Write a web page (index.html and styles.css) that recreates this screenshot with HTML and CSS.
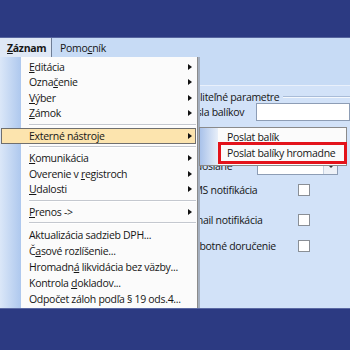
FILE: index.html
```html
<!DOCTYPE html>
<html lang="sk">
	<head>
		<meta charset="UTF-8">
		<meta name="viewport" content="width=device-width, initial-scale=1.0">
		<title>Záznam</title>
		<link rel="stylesheet" href="styles.css">
	</head>
	<body>
		<div id="screen">
			<div class="topband"></div>
			<div class="menubar">
				<div class="bar-item active"><u>Z</u>áznam</div>
				<div class="bar-item">Pomo<u>c</u>ník</div>
			</div>
			<div class="client">
				<div class="toolstrip"></div>
				<div class="form">
					<div class="group-title"><span>Voliteľné parametre</span><div class="group-line"></div></div>
					<div class="row row-text"><span class="label">Čísla balíkov</span><div class="textbox"></div></div>
					<div class="row row-gap"></div>
					<div class="row row-combo"><span class="label">Odoslané</span><div class="combo"><span class="combo-btn"></span></div></div>
					<div class="row row-check"><span class="label">SMS notifikácia</span><span class="check"></span></div>
					<div class="row row-check"><span class="label">Email notifikácia</span><span class="check"></span></div>
					<div class="row row-last"><span class="label">Sobotné doručenie</span><span class="check"></span></div>
				</div>

				<!-- rozbalené menu Záznam -->
				<div class="menu">
					<div class="mi sub"><span><u>E</u>ditácia</span></div>
					<div class="mi sub"><span>Ozna<u>č</u>enie</span></div>
					<div class="mi sub"><span><u>V</u>ýber</span></div>
					<div class="mi sub"><span><u>Z</u>ámok</span></div>
					<div class="sep"></div>
					<div class="mi sub hot"><span>Externé nástroje</span></div>
					<div class="sep"></div>
					<div class="mi sub"><span><u>K</u>omunikácia</span></div>
					<div class="mi sub"><span>Overenie v <u>r</u>egistroch</span></div>
					<div class="mi sub"><span><u>U</u>dalosti</span></div>
					<div class="sep"></div>
					<div class="mi sub"><span><u>P</u>renos -&gt;</span></div>
					<div class="sep"></div>
					<div class="mi tall"><span>Aktualizácia sadzieb DPH...</span></div>
					<div class="mi tall"><span>Č<u>a</u>sové rozlíšenie...</span></div>
					<div class="mi tall"><span>Hromadn<u>á</u> likvidácia bez väzby...</span></div>
					<div class="mi tall"><span>Kontrola <u>d</u>okladov...</span></div>
					<div class="mi tall"><span>Odpočet záloh podľa § 19 ods.4...</span></div>
				</div>

				<div class="submenu">
					<div class="si">Poslat balík</div>
					<div class="si">Poslat balíky hromadne</div>
				</div>
				<div class="mark"></div>
			</div>
			<div class="bottomband"></div>
		</div>
	</body>
</html>
```

FILE: styles.css
```css
* {
	margin: 0;
	padding: 0;
	box-sizing: border-box;
}

body {
	font-family: "Open Sans", "Noto Sans", sans-serif;
	font-size: 10.5px;
	letter-spacing: -0.3px;
	color: #161616;
	background-color: #2c3a82;
}

u {
	text-decoration-thickness: 1px;
	text-underline-offset: 1px;
}

#screen {
	width: 350px;
	height: 350px;
	display: flex;
	flex-direction: column;
	overflow: hidden;
}

.topband {
	height: 38px;
	background-color: #2c3a82;
	border-bottom: 1px solid #56649e;
}

.bottomband {
	height: 42px;
	background-color: #2c3a82;
	border-top: 1px solid #5a68a3;
}

/* menu lišta */
.menubar {
	height: 19px;
	display: flex;
	background-color: #c7dbf5;
}

.bar-item {
	display: flex;
	align-items: center;
	padding: 0 8px;
}

.bar-item.active {
	width: 52px;
	padding-left: 7px;
	font-weight: bold;
	background-color: #dfe8f5;
	border-right: 1px solid #6e7d95;
}

/* plocha okna */
.client {
	flex: 1;
	position: relative;
	overflow: hidden;
	display: flex;
	flex-direction: column;
	background-color: #d2e2f8;
}

.toolstrip {
	height: 29px;
	background-color: #c7dbf5;
	border-bottom: 1px solid #e9f0fb;
}

.form {
	padding: 5px 0 0 188px;
}

.group-title {
	height: 12px;
	display: flex;
	align-items: center;
}

.group-line {
	flex: 1;
	margin: -1px 0 0 4px;
	border-top: 1px solid #a9bcd8;
	border-bottom: 1px solid #f4f8fd;
}

.row {
	display: flex;
	align-items: center;
}

.label {
	width: 68px;
	flex-shrink: 0;
	white-space: nowrap;
}

.row-text {
	height: 18px;
}

.textbox {
	flex: 1;
	height: 18px;
	background-color: #fff;
	border: 1px solid #8d9db5;
}

.row-gap {
	height: 36px;
}

.row-combo {
	height: 18px;
}

.combo {
	width: 81px;
	height: 17px;
	margin-left: 1px;
	display: flex;
	justify-content: flex-end;
	background-color: #fff;
	border: 1px solid #8d9db5;
}

.combo-btn {
	width: 14px;
	display: flex;
	align-items: center;
	justify-content: center;
	border-left: 1px solid #c7d2e2;
	background-color: #eef2f8;
}

.combo-btn::after {
	content: "";
	border-top: 3px solid #333;
	border-left: 3px solid transparent;
	border-right: 3px solid transparent;
}

.row-check {
	height: 30px;
}

.row-last {
	height: 22px;
}

.check {
	width: 12px;
	height: 12px;
	margin-left: 42px;
	background-color: #fff;
	border: 1px solid #8a8f96;
}

/* rozbalené menu */
.menu {
	position: absolute;
	left: 0;
	top: 0;
	width: 198px;
	height: 300px;
	padding: 2px 1px 0 1px;
	background: linear-gradient(to right, #dbe7f8 0, #aec8ee 21px, #fbfbfb 21px);
	border-right: 1px solid #8b8b8b;
	box-shadow: 2px 0 0 #a4afbf;
}

.mi {
	height: 15.5px;
	display: flex;
	align-items: center;
	padding: 0 4px 0 28px;
	white-space: nowrap;
}

.mi.tall {
	height: 16px;
}

.mi.sub::after {
	content: "";
	margin-left: auto;
	border-left: 4px solid #111;
	border-top: 3.5px solid transparent;
	border-bottom: 3.5px solid transparent;
}

.mi.hot {
	background-color: #fce4ae;
	border: 1px solid #6f6f6f;
	padding-left: 27px;
	padding-right: 3px;
}

.sep {
	height: 7px;
	display: flex;
	align-items: center;
	padding-left: 28px;
}

.sep::before {
	content: "";
	flex: 1;
	border-top: 1px solid #c4c8cf;
	border-bottom: 1px solid #fff;
}

.submenu {
	position: absolute;
	left: 199px;
	top: 70px;
	width: 148px;
	padding: 1px 0 4px 0;
	background: linear-gradient(to right, #a9c2ea 0, #e8eff9 18px, #fbfbfb 18px);
	border: 1px solid #8a8a8a;
}

.si {
	height: 16px;
	display: flex;
	align-items: center;
	padding-left: 27px;
	white-space: nowrap;
}

.mark {
	position: absolute;
	left: 218px;
	top: 85px;
	width: 129px;
	height: 22px;
	border: 3px solid #e3131b;
}
```
